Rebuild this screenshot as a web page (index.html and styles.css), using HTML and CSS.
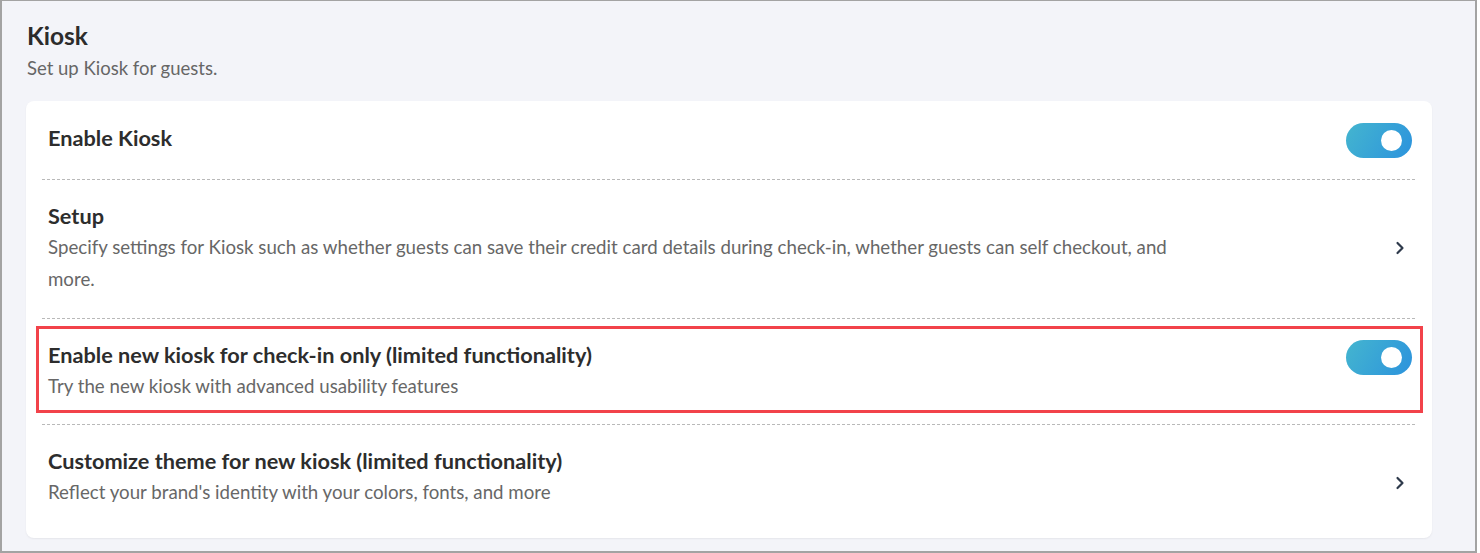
FILE: index.html
```html
<!DOCTYPE html>
<html lang="en">
<head>
<meta charset="utf-8">
<title>Kiosk</title>
<link rel="stylesheet" href="styles.css">
</head>
<body>
<div class="frame">
  <header class="page-head">
    <h1 class="page-title">Kiosk</h1>
    <p class="page-sub">Set up Kiosk for guests.</p>
  </header>
  <section class="card">
    <div class="row">
      <div class="row-text">
        <h2 class="row-title">Enable Kiosk</h2>
      </div>
      <span class="toggle on"><span class="knob"></span></span>
    </div>
    <div class="row row-link">
      <div class="row-text">
        <h2 class="row-title">Setup</h2>
        <p class="row-desc">Specify settings for Kiosk such as whether guests can save their credit card details during check-in, whether guests can self checkout, and more.</p>
      </div>
      <svg class="chev" width="10" height="14" viewBox="0 0 10 14"><path d="M2.5 2 L7.5 7 L2.5 12" fill="none" stroke="#2e3a4b" stroke-width="2.2" stroke-linecap="round" stroke-linejoin="round"/></svg>
    </div>
    <div class="row highlighted">
      <div class="row-text">
        <h2 class="row-title">Enable new kiosk for check-in only (limited functionality)</h2>
        <p class="row-desc">Try the new kiosk with advanced usability features</p>
      </div>
      <span class="toggle on"><span class="knob"></span></span>
      <span class="annot"></span>
    </div>
    <div class="row row-link">
      <div class="row-text">
        <h2 class="row-title">Customize theme for new kiosk (limited functionality)</h2>
        <p class="row-desc">Reflect your brand's identity with your colors, fonts, and more</p>
      </div>
      <svg class="chev" width="10" height="14" viewBox="0 0 10 14"><path d="M2.5 2 L7.5 7 L2.5 12" fill="none" stroke="#2e3a4b" stroke-width="2.2" stroke-linecap="round" stroke-linejoin="round"/></svg>
    </div>
  </section>
</div>
</body>
</html>
```
FILE: styles.css
```css
* { box-sizing: border-box; }
html, body { margin: 0; padding: 0; background: #ffffff; }
body { font-family: Lato, "Open Sans", sans-serif; }

.frame {
  width: 1477px;
  height: 553px;
  background: #f3f4f9;
  border: 2px solid #a3a3a3;
  border-top-width: 1px;
  padding: 20px 43px 0 24px;
  overflow: hidden;
}

.page-head { padding-left: 1px; }
.page-title {
  margin: 0;
  font-size: 24.5px;
  line-height: 30px;
  font-weight: 700;
  color: #2c2c2c;
}
.page-sub {
  margin: 5px 0 0;
  font-size: 18.5px;
  line-height: 24px;
  color: #666666;
}

.card {
  margin-top: 21px;
  background: #ffffff;
  border-radius: 8px;
  box-shadow: 0 1px 2px rgba(0,0,0,0.06);
  padding: 0 17px 0 16px;
}

.row {
  position: relative;
  display: flex;
  align-items: flex-start;
  padding: 21px 3px 22px 6px;
  border-top: 1px dashed #b9b9b9;
}
.row:first-child { border-top: none; padding-top: 22px; padding-bottom: 21px; }
.row:nth-child(2) { padding-bottom: 23px; }
.row:last-child { padding-bottom: 30px; }

.row-text { flex: 1; max-width: 1136px; }
.row-title {
  margin: 0;
  font-size: 21.7px;
  line-height: 30px;
  font-weight: 700;
  color: #2d2d2d;
}
.row-desc {
  margin: 0;
  font-size: 18.7px;
  line-height: 32px;
  color: #676767;
}

.row-link { align-items: center; }
.row-link .row-text { margin-right: auto; }
.chev { margin-left: auto; margin-right: 7px; flex: none; }
.row:last-child .chev { margin-top: 12px; }

.toggle {
  margin-left: auto;
  flex: none;
  width: 66px;
  height: 35px;
  border-radius: 18px;
  background: linear-gradient(120deg, #44b5cf 0%, #2c93dd 100%);
  display: flex;
  align-items: center;
  justify-content: flex-end;
  padding-right: 10px;
}
.knob {
  width: 21px;
  height: 21px;
  border-radius: 50%;
  background: #ffffff;
}

.annot {
  position: absolute;
  left: -6px;
  right: -8px;
  top: 7px;
  bottom: 11px;
  border: 3px solid #f2424a;
  pointer-events: none;
}
```
